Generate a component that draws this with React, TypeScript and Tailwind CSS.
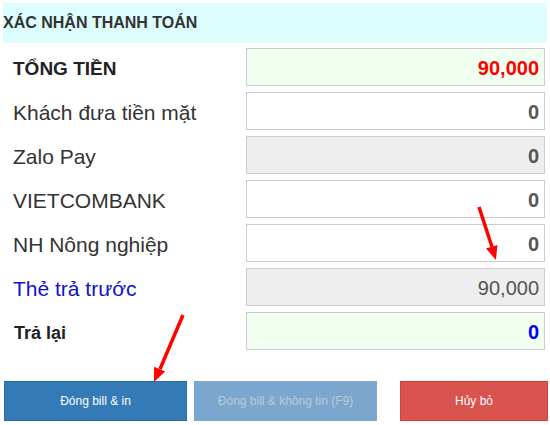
type Row = {
  label: string;
  value: string;
  labelClass: string;
  boxClass: string;
  valueClass: string;
};

const rows: Row[] = [
  {
    label: "TỔNG TIỀN",
    value: "90,000",
    labelClass: "pl-[13px] text-[19px] font-bold text-[#222]",
    boxClass: "bg-[#f0fff0]",
    valueClass: "font-bold text-[#ff0000]",
  },
  {
    label: "Khách đưa tiền mặt",
    value: "0",
    labelClass: "pl-[13px] text-[21px] text-[#333]",
    boxClass: "bg-white",
    valueClass: "font-bold text-[#555]",
  },
  {
    label: "Zalo Pay",
    value: "0",
    labelClass: "pl-[13px] text-[21px] text-[#333]",
    boxClass: "bg-[#eeeeee]",
    valueClass: "font-bold text-[#555]",
  },
  {
    label: "VIETCOMBANK",
    value: "0",
    labelClass: "pl-[13px] text-[21px] text-[#333]",
    boxClass: "bg-white",
    valueClass: "font-bold text-[#555]",
  },
  {
    label: "NH Nông nghiệp",
    value: "0",
    labelClass: "pl-[13px] text-[21px] text-[#333]",
    boxClass: "bg-white",
    valueClass: "font-bold text-[#555]",
  },
  {
    label: "Thẻ trả trước",
    value: "90,000",
    labelClass: "pl-[13px] text-[21px] text-[#1111cc]",
    boxClass: "bg-[#eeeeee]",
    valueClass: "text-[#555]",
  },
  {
    label: "Trả lại",
    value: "0",
    labelClass: "pl-[14px] text-[18px] font-bold text-[#222]",
    boxClass: "bg-[#f0fff0]",
    valueClass: "font-bold text-[#0000ff]",
  },
];

export default function App() {
  return (
    <div
      className="relative h-[425px] w-[550px] overflow-hidden bg-white"
      style={{ fontFamily: '"Liberation Sans", Arial, sans-serif' }}
    >
      <div className="mx-[3px] mt-[3px] flex h-10 items-center bg-[#dcfeff] pb-px text-[16px] font-bold text-[#333]">
        XÁC NHẬN THANH TOÁN
      </div>

      <div className="mt-[5px] flex flex-col gap-[6px]">
        {rows.map((r) => (
          <div key={r.label} className="flex h-[38px] items-center">
            <span className={`pt-[4px] ${r.labelClass}`}>{r.label}</span>
            <div
              className={`ml-auto mr-[5px] flex h-[38px] w-[299px] items-center justify-end border border-[#cccccc] pr-[5px] pt-px text-[20px] ${r.boxClass}`}
            >
              <span className={r.valueClass}>{r.value}</span>
            </div>
          </div>
        ))}
      </div>

      <div className="mt-[31px] flex pl-[4px] text-[12px]">
        <button className="h-10 w-[183px] border border-[#2e6da4] bg-[#337ab7] text-white">
          Đóng bill &amp; in
        </button>
        <button className="ml-[7px] h-10 w-[183px] border border-[#80a8cc] bg-[#7ba7cf] text-[#bcc9d6]">
          Đóng bill &amp; không tin (F9)
        </button>
        <button className="ml-[23px] h-10 w-[148px] border border-[#d43f3a] bg-[#d9534f] text-white">
          Hủy bỏ
        </button>
      </div>

      {/* annotation arrows */}
      <svg
        className="pointer-events-none absolute left-0 top-0"
        width="550"
        height="425"
        viewBox="0 0 550 425"
      >
        <line x1="479" y1="207" x2="492" y2="247" stroke="#ff0000" strokeWidth="3.5" />
        <polygon points="496,260 486,248.5 497.4,244.9" fill="#ff0000" />
        <line x1="183" y1="315" x2="160" y2="369" stroke="#ff0000" strokeWidth="3.5" />
        <polygon points="154,382 154.1,366.7 165.1,371.5" fill="#ff0000" />
      </svg>
    </div>
  );
}
